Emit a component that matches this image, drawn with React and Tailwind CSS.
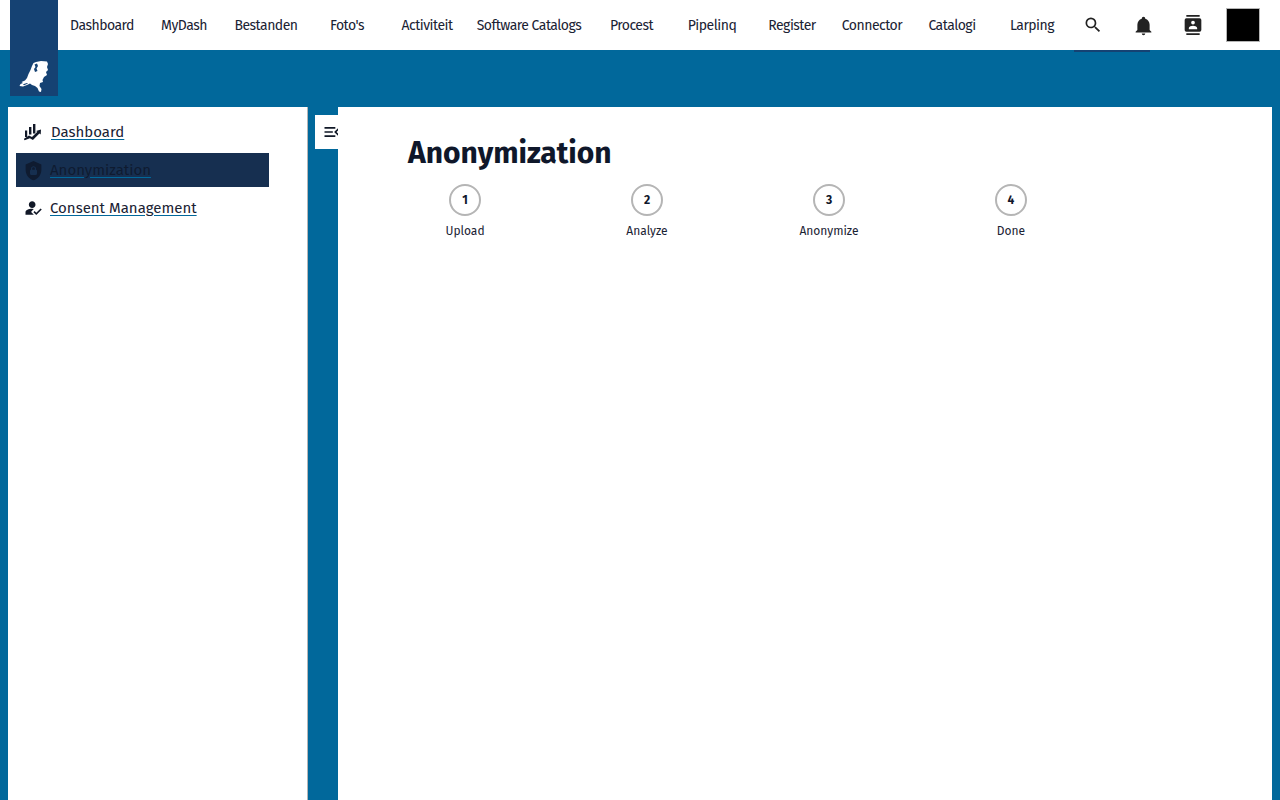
const navItems = [
  { label: "Dashboard", width: "w-[82px]" },
  { label: "MyDash", width: "w-[82px]" },
  { label: "Bestanden", width: "w-[82px]" },
  { label: "Foto's", width: "w-[80px]" },
  { label: "Activiteit", width: "w-[80px]" },
  { label: "Software Catalogs", width: "w-[124px]" },
  { label: "Procest", width: "w-[81px]" },
  { label: "Pipelinq", width: "w-[80px]" },
  { label: "Register", width: "w-[80px]" },
  { label: "Connector", width: "w-[80px]" },
  { label: "Catalogi", width: "w-[80px]" },
  { label: "Larping", width: "w-[80px]" },
];

const steps = ["Upload", "Analyze", "Anonymize", "Done"];

function Icon({ d, className }) {
  return (
    <svg viewBox="0 0 24 24" fill="currentColor" className={className}>
      <path d={d} />
    </svg>
  );
}

const magnify = "M9.5,3A6.5,6.5 0 0,1 16,9.5C16,11.11 15.41,12.59 14.44,13.73L14.71,14H15.5L20.5,19L19,20.5L14,15.5V14.71L13.73,14.44C12.59,15.41 11.11,16 9.5,16A6.5,6.5 0 0,1 3,9.5A6.5,6.5 0 0,1 9.5,3M9.5,5C7,5 5,7 5,9.5C5,12 7,14 9.5,14C12,14 14,12 14,9.5C14,7 12,5 9.5,5Z";
const bell = "M21,19V20H3V19L5,17V11C5,7.9 7.03,5.17 10,4.29C10,4.19 10,4.1 10,4A2,2 0 0,1 12,2A2,2 0 0,1 14,4C14,4.1 14,4.19 14,4.29C16.97,5.17 19,7.9 19,11V17L21,19M14,21A2,2 0 0,1 12,23A2,2 0 0,1 10,21";
const contacts = "M20,0H4V2H20V0M4,24H20V22H4V24M20,4H4A2,2 0 0,0 2,6V18A2,2 0 0,0 4,20H20A2,2 0 0,0 22,18V6A2,2 0 0,0 20,4M12,6.75A2.25,2.25 0 0,1 14.25,9A2.25,2.25 0 0,1 12,11.25A2.25,2.25 0 0,1 9.75,9A2.25,2.25 0 0,1 12,6.75M17,17H7V15.5C7,13.83 10.33,13 12,13C13.67,13 17,13.83 17,15.5V17Z";
const shieldLock = "M12,1L3,5V11C3,16.55 6.84,21.74 12,23C17.16,21.74 21,16.55 21,11V5L12,1M12,7C13.4,7 14.8,8.1 14.8,9.5V11C15.4,11 16,11.6 16,12.3V15.8C16,16.4 15.4,17 14.7,17H9.2C8.6,17 8,16.4 8,15.7V12.2C8,11.6 8.6,11 9.2,11V9.5C9.2,8.1 10.6,7 12,7M12,8.2C11.2,8.2 10.5,8.7 10.5,9.5V11H13.5V9.5C13.5,8.7 12.8,8.2 12,8.2Z";
const accountCheck = "M21.1 12.5L22.5 13.91L15.97 20.5L12.5 17L13.9 15.59L15.97 17.67L21.1 12.5M10 17L13 20H3V17C3 14.79 6.58 13 11 13L12.89 13.11L10 16.1V17M11 4C13.21 4 15 5.79 15 8S13.21 12 11 12 7 10.21 7 8 8.79 4 11 4Z";
const menuOpen = "M21,15.61L19.59,17L14.58,12L19.59,7L21,8.39L17.44,12L21,15.61M3,6H16V8H3V6M3,13V11H13V13H3M3,18V16H16V18H3Z";

function ChartIcon() {
  return (
    <svg viewBox="0 0 18 18" className="h-[18px] w-[18px] text-[#111827]" fill="currentColor">
      <rect x="1" y="7.5" width="2.2" height="6.5" />
      <rect x="5" y="4" width="2.4" height="7.5" />
      <rect x="9" y="1" width="2.4" height="9.5" />
      <path d="M.6 17.2l-.8-1.400L5 12.400l3 1.700 5.400-5.300-1.400-.8 5-1.500-.3 5-1.300-.9-6.500 6.300-3-1.700Z" />
    </svg>
  );
}

export default function App() {
  return (
    <div className="relative h-screen overflow-hidden bg-[#01689b] font-['Fira_Sans','Noto_Sans',sans-serif] text-[#1a2233]">
      {/* Top bar */}
      <header className="flex h-[50px] items-center bg-white pl-[61px]">
        {navItems.map((item) => (
          <a key={item.label} className={`${item.width} text-center text-[14px] tracking-[-0.5px] whitespace-nowrap`}>
            {item.label}
          </a>
        ))}
        <div className="relative ml-[2px] flex h-full w-[38px] items-center justify-center">
          <Icon d={magnify} className="h-[20px] w-[20px] text-[#222222]" />
          <span className="absolute left-0 top-full h-[2px] w-[76px] bg-[#154273]" />
        </div>
        <div className="flex w-[62px] justify-center">
          <Icon d={bell} className="h-[21px] w-[21px] text-[#222222]" />
        </div>
        <div className="flex w-[38px] justify-center">
          <Icon d={contacts} className="h-[20px] w-[20px] text-[#222222]" />
        </div>
        <div className="ml-[14px] h-[34px] w-[34px] border border-[#b5b5b5] bg-black" />
      </header>

      {/* Logo */}
      <div className="absolute left-[10px] top-0 flex h-[96px] w-[48px] items-end justify-center bg-[#154273]">
        <svg viewBox="0 0 34 38" className="h-[38px] w-[34px]" fill="white" fillRule="evenodd">
          <path d="M19 4 24 3 30 3.500 31 6 30 9 31 12 29 14 30 17 27 19 25.500 22 26 24 23 25 22.500 28 24.500 31 24 34 22 33.500 20.500 30 18 28 15 27 13 25.500 10 27 6 28.500 2.500 28 3.500 26 6 25 4.500 24 8 22.500 10 20 11.500 16 13.500 12 15 8 16.500 5ZM17.500 6.500 20 5.500 21 8 19.500 10.500 20.500 13 18 14 17 11 18.500 9ZM6 26.200 10 25 11 25.600 7 27.200Z" />
        </svg>
      </div>

      <div className="flex h-[calc(100vh-50px)] pl-2 pr-2 pt-[57px]">
        {/* Sidebar */}
        <aside className="w-[300px] shrink-0 border-r border-[#b5b5b5] bg-white py-[8px] pl-[8px] pr-[38px] text-[15px]">
          <a className="flex h-[34px] items-center">
            <span className="flex w-[34px] shrink-0 justify-center"><ChartIcon /></span>
            <span className="ml-[1px] underline decoration-[#01689b] underline-offset-2">Dashboard</span>
          </a>
          <a className="mt-[4px] flex h-[34px] items-center bg-[#162f50]">
            <span className="flex w-[34px] shrink-0 justify-center">
              <Icon d={shieldLock} className="h-[21px] w-[21px] text-[#0f1b30]" />
            </span>
            <span className="text-[#0f1b30] underline decoration-[#01689b] underline-offset-2">Anonymization</span>
          </a>
          <a className="mt-[4px] flex h-[34px] items-center">
            <span className="flex w-[34px] shrink-0 justify-center">
              <Icon d={accountCheck} className="h-[20px] w-[20px] text-[#111827]" />
            </span>
            <span className="underline decoration-[#01689b] underline-offset-2">Consent Management</span>
          </a>
        </aside>

        {/* Collapse toggle */}
        <div className="w-[30px] shrink-0 pl-[7px] pt-[8px]">
          <button className="flex h-[34px] w-[23px] items-center overflow-hidden bg-white pl-[7px]">
            <Icon d={menuOpen} className="h-[20px] w-[20px] shrink-0 text-[#111827]" />
          </button>
        </div>

        {/* Main */}
        <main className="flex-1 bg-white pl-[36px] pt-[24px]">
          <h1 className="pl-[34px] text-[30px] leading-[44px] font-bold text-[#0f172a]">Anonymization</h1>
          <ol className="mt-[9px] flex">
            {steps.map((step, i) => (
              <li key={step} className="flex w-[182px] flex-col items-center">
                <span className="flex h-[32px] w-[32px] items-center justify-center rounded-full border-2 border-[#b5b5b5] text-[12px] font-bold text-[#0f172a]">
                  {i + 1}
                </span>
                <span className="mt-[6px] text-[12px] leading-[18px]">{step}</span>
              </li>
            ))}
          </ol>
        </main>
      </div>
    </div>
  );
}
